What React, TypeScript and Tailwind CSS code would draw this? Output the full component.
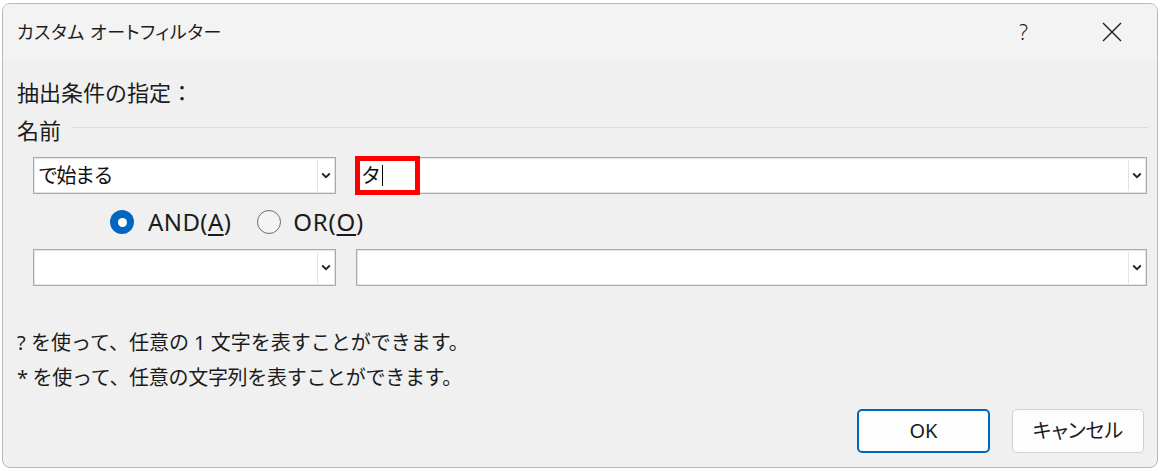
import React from "react";

const FONT = "[font-family:'Noto_Sans','Noto_Sans_CJK_JP',sans-serif]";

function Chevron() {
  return (
    <svg width="10" height="7" viewBox="0 0 10 7" className="block">
      <path d="M1.2 1.5 L5 5.2 L8.8 1.5" fill="none" stroke="#222" strokeWidth="1.8" />
    </svg>
  );
}

function Combo({ w, text, children }: { w: string; text?: string; children?: React.ReactNode }) {
  return (
    <div className={`${w} relative h-[37px] flex border border-[#aaaaaa] bg-white shadow-[inset_0_0_0_1px_#e4e4e4]`}>
      <div className="flex-1 flex items-center pl-[4px] text-[20px] tracking-[-1.5px] text-[#111]">{text}{children}</div>
      <div className="w-[17px] flex items-center justify-center border-l border-[#e2e2e2] my-[2px] mr-[1px]">
        <Chevron />
      </div>
    </div>
  );
}

function Radio({ checked }: { checked: boolean }) {
  return checked ? (
    <div className="w-[24px] h-[24px] rounded-full bg-[#0067c0] flex items-center justify-center">
      <div className="w-[9px] h-[9px] rounded-full bg-white" />
    </div>
  ) : (
    <div className="w-[24px] h-[24px] rounded-full border-[1.5px] border-[#6e6e6e] bg-[#f4f4f4]" />
  );
}

export default function App() {
  return (
    <div className={`w-[1161px] h-[471px] bg-white pt-[3px] pl-[2px] ${FONT} text-[#1b1b1b]`}>
      <div className="w-[1156px] h-[465px] rounded-[8px] border border-[#b9b9b9] bg-[#f0f0f0] overflow-hidden flex flex-col">
        {/* title bar */}
        <div className="h-[55px] shrink-0 bg-[#f3f3f3] flex items-center pl-[14px]">
          <div className="text-[18px] leading-[24px] [font-feature-settings:'palt'] tracking-[0.6px]">カスタム オートフィルター</div>
          <div className="flex-1" />
          <div className="text-[21px] leading-[24px] mr-[74px] font-light">?</div>
          <svg width="20" height="20" viewBox="0 0 20 20" className="mr-[35px]">
            <path d="M1 1 L19 19 M19 1 L1 19" stroke="#1b1b1b" strokeWidth="1.4" />
          </svg>
        </div>
        {/* body */}
        <div className="flex flex-col pl-[14px] pr-[9px]">
          <div className="mt-[21px] h-[24px] text-[22px] leading-[24px]">抽出条件の指定：</div>
          <div className="mt-[14px] h-[24px] flex items-center">
            <div className="text-[22px] leading-[24px]">名前</div>
            <div className="flex-1 h-px bg-[#dadada] ml-[11px] mt-[-5px]" />
          </div>
          <div className="mt-[15px] ml-[16px] flex gap-[20px]">
            <Combo w="w-[303px]" text="で始まる" />
            <div className="relative">
              <Combo w="w-[791px]" />
              <div className="absolute left-[-1px] top-[-1px] w-[65px] h-[39px] border-[5px] border-[#ff0000] flex items-center pl-[1px]">
                <span className="text-[20px] leading-[24px] text-[#111]">タ</span>
                <span className="w-px h-[21px] bg-black ml-[1px]" />
              </div>
            </div>
          </div>
          <div className="mt-[16px] h-[24px] flex items-center pl-[93px]">
            <Radio checked />
            <div className="ml-[14px] text-[24px] leading-[24px] tracking-[0.4px]">AND(<span className="underline underline-offset-[3px] decoration-[1.5px]">A</span>)</div>
            <div className="ml-[26px]"><Radio checked={false} /></div>
            <div className="ml-[12px] text-[24px] leading-[24px] tracking-[0.8px]">OR(<span className="underline underline-offset-[3px] decoration-[1.5px]">O</span>)</div>
          </div>
          <div className="mt-[15px] ml-[16px] flex gap-[20px]">
            <Combo w="w-[303px]" />
            <Combo w="w-[791px]" />
          </div>
          <div className="mt-[45px] h-[24px] text-[20px] leading-[24px]">? を使って、任意の 1 文字を表すことができます。</div>
          <div className="mt-[11px] h-[24px] text-[20px] leading-[24px] tracking-[-0.3px]">* を使って、任意の文字列を表すことができます。</div>
          <div className="mt-[19px] flex justify-end gap-[22px] pr-[4px]">
            <div className="w-[133px] h-[44px] rounded-[5px] border-[2px] border-[#0067c0] bg-[#fdfdfd] flex items-center justify-center text-[20px]">OK</div>
            <div className="w-[132px] h-[44px] rounded-[5px] border border-[#d0d0d0] bg-[#fdfdfd] flex items-center justify-center text-[20px] [font-feature-settings:'palt']">キャンセル</div>
          </div>
        </div>
      </div>
    </div>
  );
}
